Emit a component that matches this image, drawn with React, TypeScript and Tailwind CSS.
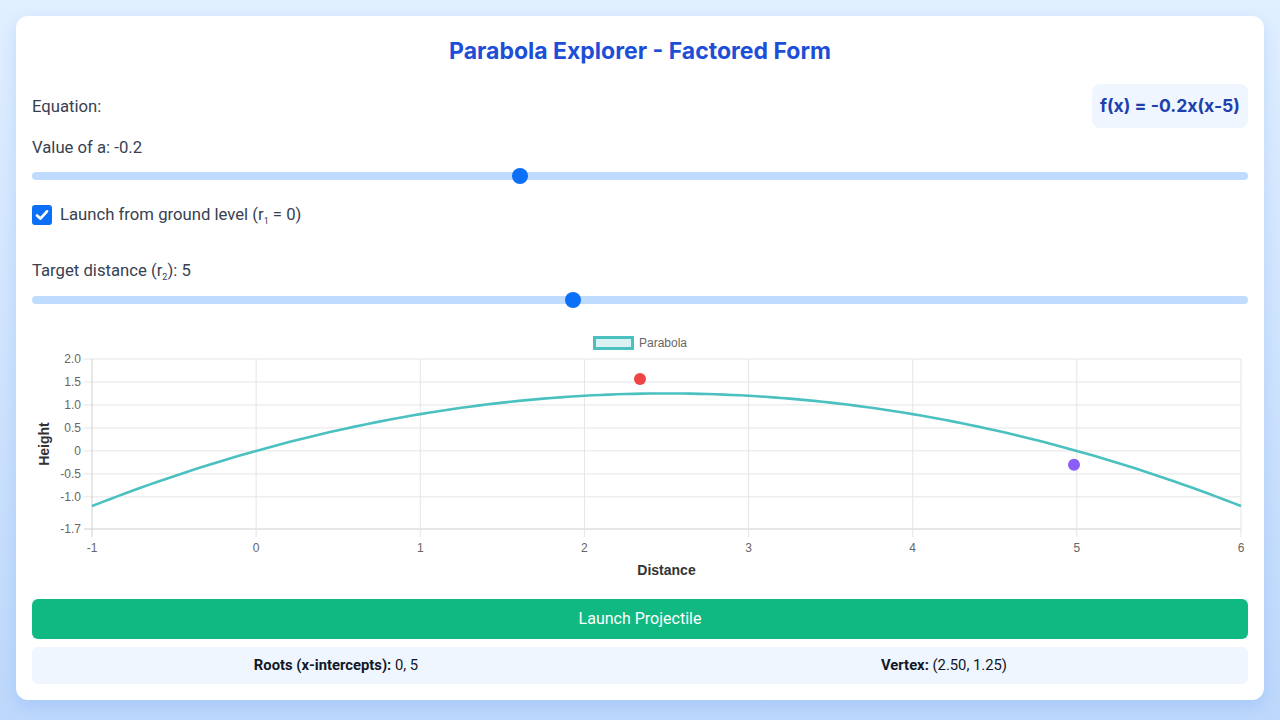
import React from "react";

const X0 = 60;
const UX = 164.14;
const Y0 = 27;
const UY = 45.95;
const px = (x: number) => X0 + (x + 1) * UX;
const py = (y: number) => Y0 + (2 - y) * UY;

function Slider({ frac }: { frac: number }) {
  return (
    <div className="relative h-4 flex items-center">
      <div className="w-full h-2 rounded-full bg-[#bfdbfe]" />
      <div
        className="absolute top-0 w-4 h-4 rounded-full bg-[#0b6ff8]"
        style={{ left: `calc(${frac * 100}% - ${frac * 16}px)` }}
      />
    </div>
  );
}

function Chart() {
  const yTicks: [number, string][] = [
    [2, "2.0"],
    [1.5, "1.5"],
    [1, "1.0"],
    [0.5, "0.5"],
    [0, "0"],
    [-0.5, "-0.5"],
    [-1, "-1.0"],
    [-1.7, "-1.7"],
  ];
  const xTicks = [-1, 0, 1, 2, 3, 4, 5, 6];
  const pts: string[] = [];
  for (let i = 0; i <= 140; i++) {
    const x = -1 + i * 0.05;
    const y = -0.2 * x * (x - 5);
    pts.push(`${px(x).toFixed(2)},${py(y).toFixed(2)}`);
  }
  const font = "'Liberation Sans', Arial, sans-serif";
  return (
    <svg width="1216" height="248" viewBox="0 0 1216 248" className="block">
      {/* legend */}
      <rect x="562.5" y="5.5" width="38" height="11" fill="rgba(75,192,192,0.2)" stroke="#4bc0c0" strokeWidth="3" />
      <text x="607" y="11" fontSize="12" fill="#666" fontFamily={font} dominantBaseline="central">
        Parabola
      </text>
      {/* horizontal grid */}
      {yTicks.map(([v, l]) => (
        <g key={l}>
          <line x1="52" x2="1209" y1={py(v)} y2={py(v)} stroke={v === -1.7 ? "#cfcfcf" : "#e5e5e5"} strokeWidth="1" />
          <text x="49" y={py(v)} fontSize="12" fill="#666" fontFamily={font} textAnchor="end" dominantBaseline="central">
            {l}
          </text>
        </g>
      ))}
      {/* vertical grid */}
      {xTicks.map((v) => (
        <g key={v}>
          <line x1={px(v)} x2={px(v)} y1={Y0} y2="205" stroke={v === -1 ? "#cfcfcf" : "#e5e5e5"} strokeWidth="1" />
          <text x={px(v)} y="216" fontSize="12" fill="#666" fontFamily={font} textAnchor="middle" dominantBaseline="central">
            {v}
          </text>
        </g>
      ))}
      {/* curve */}
      <polyline points={pts.join(" ")} fill="none" stroke="#4bc0c0" strokeWidth="2.6" strokeLinejoin="round" />
      {/* points */}
      <circle cx="608" cy="47" r="6" fill="#ef4444" />
      <circle cx="1042" cy="132.7" r="6" fill="#8b5cf6" />
      {/* axis titles */}
      <text
        x="12"
        y="112"
        fontSize="14"
        fontWeight="bold"
        fill="#333"
        fontFamily={font}
        textAnchor="middle"
        dominantBaseline="central"
        transform="rotate(-90 12 112)"
      >
        Height
      </text>
      <text x="634.5" y="238" fontSize="14" fontWeight="bold" fill="#333" fontFamily={font} textAnchor="middle" dominantBaseline="central">
        Distance
      </text>
    </svg>
  );
}

export default function App() {
  return (
    <div className="w-[1280px] h-[720px] overflow-hidden bg-linear-to-b from-[#e1efff] to-[#bdd8fb] pt-4 px-4 font-['Roboto',sans-serif]">
      <div className="bg-white rounded-xl shadow-[0_6px_16px_rgba(59,130,246,0.18)] p-4 flex flex-col">
        <div className="h-[38px] flex items-center justify-center text-[23px] font-bold text-[#1d4ed8] font-['Inter',sans-serif]">
          Parabola Explorer - Factored Form
        </div>
        <div className="mt-[14px] h-[44px] flex items-center justify-between">
          <span className="text-[16.7px] text-[#374151] pt-[2px]">Equation:</span>
          <div className="h-[44px] px-2 rounded-lg bg-[#eff6ff] flex items-center text-[17.6px] font-bold text-[#1e40af] font-['Inter',sans-serif]">
            f(x) = -0.2x(x-5)
          </div>
        </div>
        <div className="mt-2 h-6 flex items-center text-[16.7px] text-[#374151]">Value of a: -0.2</div>
        <div className="mt-2">
          <Slider frac={0.4} />
        </div>
        <div className="mt-[19px] h-6 flex items-center gap-2 text-[16.7px] text-[#374151]">
          <div className="w-5 h-5 rounded-[3px] bg-[#0b6ff8] flex items-center justify-center">
            <svg width="16" height="16" viewBox="0 0 16 16">
              <path d="M3 8.4 L6.4 11.6 L13 4.4" fill="none" stroke="white" strokeWidth="2.8" strokeLinecap="round" strokeLinejoin="round" />
            </svg>
          </div>
          <span>
            Launch from ground level (r<sub className="text-[9px] align-[-1px]">1</sub> = 0)
          </span>
        </div>
        <div className="mt-[32px] h-6 flex items-center text-[16.7px] text-[#374151]">
          <span>
            Target distance (r<sub className="text-[9px] align-[-1px]">2</sub>): 5
          </span>
        </div>
        <div className="mt-[9px]">
          <Slider frac={4 / 9} />
        </div>
        <div className="mt-6">
          <Chart />
        </div>
        <div className="mt-[19px] h-10 rounded-md bg-[#10b981] flex items-center justify-center text-white text-base">
          Launch Projectile
        </div>
        <div className="mt-2 h-[37px] rounded-md bg-[#eff6ff] grid grid-cols-2 items-center text-[14.8px] text-[#111827]">
          <div className="text-center">
            <span className="font-bold">Roots (x-intercepts):</span> 0, 5
          </div>
          <div className="text-center">
            <span className="font-bold">Vertex:</span> (2.50, 1.25)
          </div>
        </div>
      </div>
    </div>
  );
}
